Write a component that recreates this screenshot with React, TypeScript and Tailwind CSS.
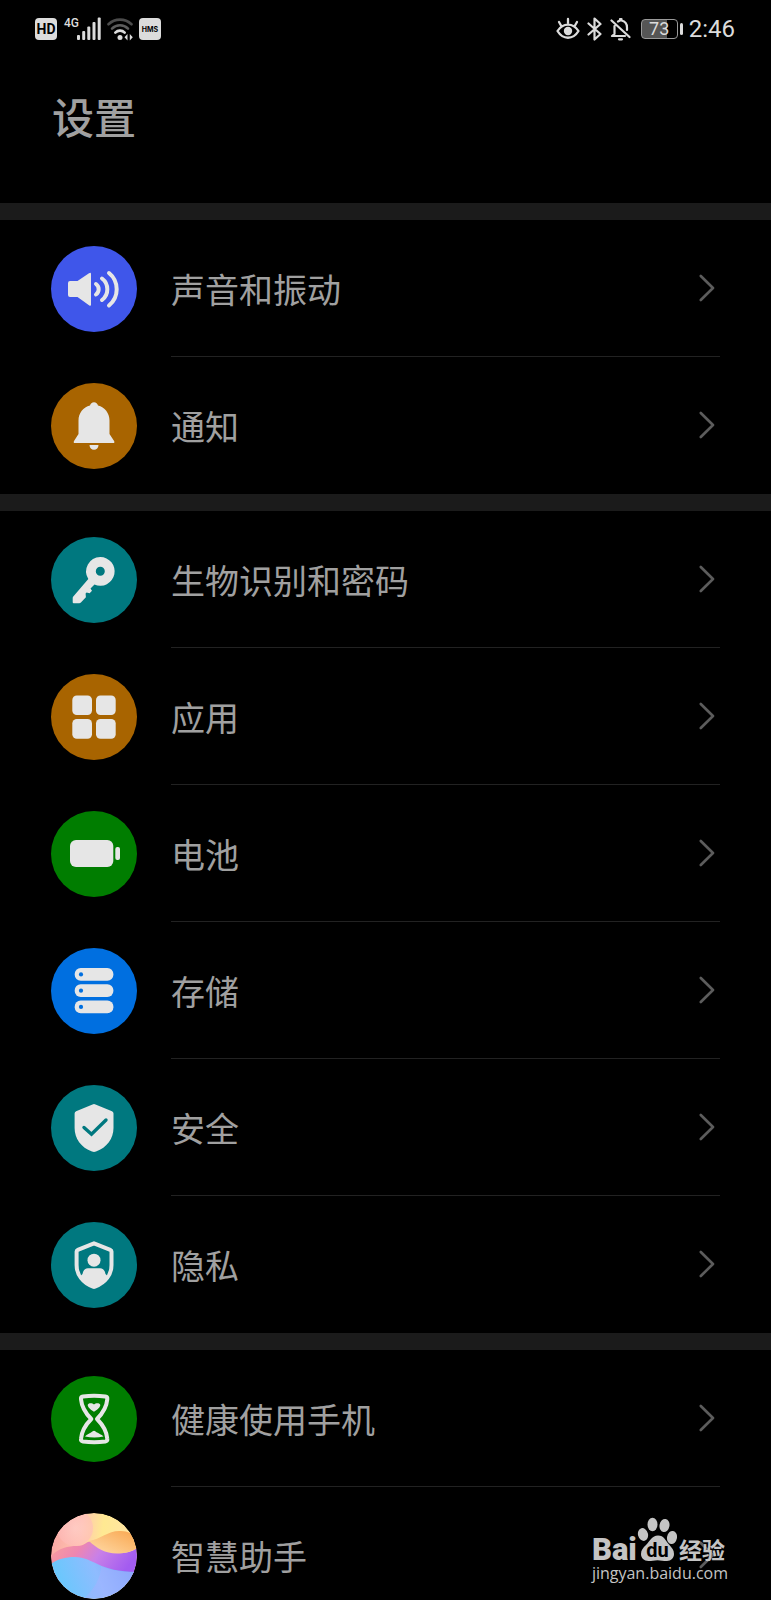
import type { ReactNode } from "react";

const FG = "#e6e6e6";

const SoundIcon = () => (
  <>
    <path d="M17 37q0-2 2-2h7.500L38 27.300q2-1.300 2 .7v30.500q0 2-2 .7L26.500 51H19q-2 0-2-2z" fill={FG} />
    <g fill="none" stroke={FG} strokeWidth="4" strokeLinecap="round">
      <path d="M45 38a6.500 6.500 0 0 1 0 10.500" />
      <path d="M51 32.500a13.500 13.500 0 0 1 0 21.500" />
      <path d="M58 27a21 21 0 0 1 0 32.500" />
    </g>
  </>
);

const BellIcon = () => (
  <path
    d="M43 19.300c2 0 3.600 1.300 4 3.200 6.700 1.800 11.500 7.500 11.500 15V51l4.600 7q1 2-1 2H24q-2 0-1-2l4.500-7V37.500c0-7.500 4.800-13.200 11.500-15 .4-1.900 2-3.200 4-3.200zM38.500 62h9c0 2.800-2 4.800-4.500 4.800s-4.500-2-4.500-4.800z"
    fill={FG}
  />
);

const KeyIcon = () => (
  <path
    fillRule="evenodd"
    d="M49.300 20a14.400 14.400 0 1 1-5.800 27.600L41 50l-1.500 1.500 1.500 2.300-2.400 2.400-3-.6-1 1 .3 3.600-5 5.300q-.7.700-1.700.700h-5.500q-1 0-1-1V61q0-1 .8-1.800L37.300 42A14.400 14.400 0 0 1 49.300 20zm0 9.800a4.500 4.500 0 1 0 0 9 4.500 4.500 0 0 0 0-9z"
    fill={FG}
  />
);

const AppsIcon = () => (
  <g fill={FG}>
    <rect x="21.300" y="21.500" width="19.700" height="19.500" rx="4.500" />
    <rect x="45" y="21.500" width="19.700" height="19.500" rx="4.500" />
    <rect x="21.300" y="45" width="19.700" height="19.700" rx="4.500" />
    <rect x="45" y="45" width="19.700" height="19.700" rx="4.500" />
  </g>
);

const BatteryIcon = () => (
  <g fill={FG}>
    <rect x="19" y="29" width="43.300" height="27" rx="6" />
    <rect x="64.300" y="36" width="4.700" height="13" rx="2" />
  </g>
);

const StorageIcon = () => (
  <>
    {[20, 36.3, 52.5].map((y) => (
      <g key={y}>
        <rect x="23.700" y={y} width="38.700" height="12.800" rx="6" fill={FG} />
        <circle cx="30" cy={y + 6.4} r="2.100" fill="#006fe0" />
      </g>
    ))}
  </>
);

const ShieldCheckIcon = () => (
  <>
    <path
      d="M41.500 19.500q1.500-.8 3 0L61 26.300q1.500.7 1.500 2.200V43c0 10.500-6.500 19.500-17.500 23.600q-2 .8-4 0C30 62.500 23.600 53.500 23.600 43V28.500q0-1.500 1.500-2.200z"
      fill={FG}
    />
    <path d="M33 42.500l7.500 6.700L55 35" fill="none" stroke="#00787f" strokeWidth="3.400" strokeLinecap="round" strokeLinejoin="miter" />
  </>
);

const PrivacyIcon = () => (
  <>
    <path
      d="M43 21.300l16.300 6.500q1.200.5 1.200 1.800V43c0 9.500-6 17.700-16.500 21.700q-1 .4-2 0C31.500 60.700 25.600 52.500 25.600 43V29.600q0-1.300 1.200-1.800z"
      fill="none"
      stroke={FG}
      strokeWidth="4"
      strokeLinejoin="round"
    />
    <circle cx="43" cy="38.200" r="6.500" fill={FG} />
    <path d="M29.500 54l2-2c.5-3.500 2.500-5.700 5.500-5.700h12c3 0 5 2.200 5.500 5.700l2 2c-3 6-8 9.500-13.500 11.500C37.500 63.500 32.500 60 29.500 54z" fill={FG} />
  </>
);

const HourglassIcon = () => (
  <>
    <path
      d="M32 20.500q11-1.500 22.300 0 2.300.4 2 2.700C55.600 31 52 37 46 43c6 6 9.600 12 10.300 19.800q.3 2.300-2 2.700-11 1.500-22.300 0-2.300-.4-2-2.700C30.700 55 34.300 49 40.300 43c-6-6-9.600-12-10.300-19.800q-.3-2.300 2-2.700z"
      fill="none"
      stroke={FG}
      strokeWidth="4"
      strokeLinejoin="round"
    />
    <path d="M43 28.500c1.800-1.800 6-1.800 6.300.6 0 2.300-3.300 4.900-6.300 6.700-3-1.800-6.300-4.400-6.300-6.700.3-2.400 4.500-2.400 6.300-.6zM34 60.500c1.500-2 6-3.500 7.700-5.200q1.300-1.200 2.600 0C46 57 51 58.500 52.500 60.500q-9 2.200-18.500 0z" fill={FG} />
  </>
);

const AssistantIcon = () => (
  <>
    <defs>
      <linearGradient id="orbTop" x1="0" y1="0.200" x2="1" y2="0.300">
        <stop offset="0" stopColor="#f9a6a4" />
        <stop offset="0.350" stopColor="#ffc8b0" />
        <stop offset="0.600" stopColor="#ffe992" />
        <stop offset="1" stopColor="#ffe3a8" />
      </linearGradient>
      <linearGradient id="orbOrange" x1="0" y1="1" x2="1" y2="0">
        <stop offset="0" stopColor="#ffdcaa" />
        <stop offset="1" stopColor="#f9a64e" />
      </linearGradient>
      <linearGradient id="orbPurple" x1="0" y1="0" x2="1" y2="0.300">
        <stop offset="0" stopColor="#f7a09c" />
        <stop offset="0.350" stopColor="#ee86b0" />
        <stop offset="0.600" stopColor="#c880e8" />
        <stop offset="1" stopColor="#a35cf0" />
      </linearGradient>
      <linearGradient id="orbBlue" x1="0" y1="0.600" x2="1" y2="0.400">
        <stop offset="0" stopColor="#62cafc" />
        <stop offset="0.550" stopColor="#8fbcff" />
        <stop offset="1" stopColor="#79a5fa" />
      </linearGradient>
      <radialGradient id="orbPink">
        <stop offset="0" stopColor="#ffd0d0" />
        <stop offset="1" stopColor="#ffbcba" />
      </radialGradient>
      <clipPath id="orbClip">
        <circle cx="43" cy="43" r="43" />
      </clipPath>
    </defs>
    <g clipPath="url(#orbClip)">
      <rect width="86" height="86" fill="url(#orbTop)" />
      <circle cx="24" cy="15" r="18" fill="url(#orbPink)" opacity="0.600" />
      <path d="M0 43c8-8 17-10 26-10 10 0 8-6 16-4 12 4 16 11 26 11 7 0 13-1 18-5v32H0z" fill="url(#orbPurple)" />
      <path d="M38 28c12-2 20-11 32-10 7 0 12 3 16 7v10c-6 4-13 5.500-20 5.500-12 0-20-5-28-12.500z" fill="url(#orbOrange)" />
      <path d="M0 51c7-5 14-7 24-7 18 0 24 15 62 15v27H0z" fill="url(#orbBlue)" />
      <path d="M50 53c0 12-7 24-18 33h54V59c-16 0-28-2-36-6z" fill="#b3adff" opacity="0.350" />
    </g>
  </>
);

type Item = { label: string; color: string; icon: ReactNode };

const groups: Item[][] = [
  [
    { label: "声音和振动", color: "bg-[#3f56ea]", icon: <SoundIcon /> },
    { label: "通知", color: "bg-[#a86400]", icon: <BellIcon /> },
  ],
  [
    { label: "生物识别和密码", color: "bg-[#00787f]", icon: <KeyIcon /> },
    { label: "应用", color: "bg-[#a86400]", icon: <AppsIcon /> },
    { label: "电池", color: "bg-[#007d00]", icon: <BatteryIcon /> },
    { label: "存储", color: "bg-[#006fe0]", icon: <StorageIcon /> },
    { label: "安全", color: "bg-[#00787f]", icon: <ShieldCheckIcon /> },
    { label: "隐私", color: "bg-[#00787f]", icon: <PrivacyIcon /> },
  ],
  [
    { label: "健康使用手机", color: "bg-[#007d00]", icon: <HourglassIcon /> },
    { label: "智慧助手", color: "bg-black", icon: <AssistantIcon /> },
  ],
];

function Row({ item, last }: { item: Item; last: boolean }) {
  return (
    <li>
      <a href="#" className="flex h-[137px] items-center gap-[34px] px-[51px]">
        <span className={`size-[86px] shrink-0 overflow-hidden rounded-full ${item.color}`}>
          <svg viewBox="0 0 86 86" className="size-full" aria-hidden="true">
            {item.icon}
          </svg>
        </span>
        <span className={`flex h-full grow items-center justify-between border-b pr-[5px] ${last ? "border-transparent" : "border-[#222222]"}`}>
          <span className="pt-px text-[34px] leading-10 text-[#a0a0a0]">{item.label}</span>
          <svg viewBox="0 0 16 28" className="h-7 w-4" fill="none" stroke="#5c5c5c" strokeWidth="2.600" strokeLinecap="round" strokeLinejoin="round" aria-hidden="true">
            <path d="M1.800 2l12.200 12L1.800 26" />
          </svg>
        </span>
      </a>
    </li>
  );
}

function StatusBar() {
  return (
    <div className="flex h-[58px] items-center justify-between pr-9 pl-[35px] font-[Roboto,sans-serif] text-[#dcdcdc]">
      <div className="flex items-center">
        <span className="flex size-[22px] items-center justify-center rounded bg-[#dcdcdc] text-[14px] leading-none font-bold text-black">HD</span>
        <span className="ml-[7px] -mt-3 text-[12px] leading-3 font-medium">4G</span>
        <svg viewBox="0 0 24 24" className="-ml-0.5 size-6" fill="currentColor" aria-hidden="true">
          <rect x="0" y="18" width="3" height="5" rx="1" />
          <rect x="5.200" y="14" width="3" height="9" rx="1" />
          <rect x="10.300" y="9.500" width="3" height="13.500" rx="1" />
          <rect x="15.500" y="5" width="3" height="18" rx="1" />
          <rect x="20.700" y="0.500" width="3" height="22.500" rx="1" />
        </svg>
        <svg viewBox="0 0 26 24" className="ml-1.5 h-6 w-[26px]" fill="none" strokeWidth="2.600" strokeLinecap="round" aria-hidden="true">
          <path d="M1.500 7.300a16.500 16.500 0 0 1 23 0" stroke="#4c4c4c" />
          <path d="M5 11.600a11.200 11.200 0 0 1 16 0" stroke="#5c5c5c" />
          <path d="M8.300 15.600a6.600 6.600 0 0 1 9.400 0" stroke="currentColor" />
          <circle cx="13" cy="20.500" r="2.500" fill="currentColor" />
          <path d="M20.500 17v6.500l-3-3.200zM22.800 17v6.500l3-3.200z" fill="currentColor" />
        </svg>
        <span className="ml-1.5 flex size-[22px] items-center justify-center rounded bg-[#dcdcdc] font-[Inter,sans-serif] text-[7px] leading-none font-bold text-black">HMS</span>
      </div>
      <div className="flex items-center">
        <svg viewBox="0 0 24 24" className="size-6" fill="none" stroke="currentColor" strokeWidth="2.300" strokeLinecap="round" aria-hidden="true">
          <path d="M1.500 14C7 5.500 17 5.500 22.500 14 17 23 7 23 1.500 14z" strokeLinejoin="round" />
          <circle cx="12" cy="14" r="4.200" fill="currentColor" stroke="none" />
          <path d="M12 2v4M3 5l2 3.500M21 5l-2 3.500" />
        </svg>
        <svg viewBox="0 0 16 24" className="ml-[7px] h-6 w-4" fill="none" stroke="currentColor" strokeWidth="2.200" strokeLinejoin="round" strokeLinecap="round" aria-hidden="true">
          <path d="M1.500 6.500l12 10.500-6 5.500v-21l6 5.500-12 10.500" />
        </svg>
        <svg viewBox="0 0 22 24" className="ml-[7px] h-6 w-[22px]" fill="none" stroke="currentColor" strokeWidth="2.200" strokeLinecap="round" strokeLinejoin="round" aria-hidden="true">
          <path d="M1.500 3.500l18 16.500M4.500 9v8L2 19h13M8 4.500l2-1V2h1.500v1.500c4 .8 5.500 3.500 5.500 7v2.500" />
          <path d="M9 22.300h3" />
        </svg>
        <span className="ml-[9px] flex h-5 w-[37px] items-center justify-center rounded border border-[#9a9a9a] bg-linear-to-r from-[#555555] from-70% to-black to-70% text-[18px] leading-none">73</span>
        <span className="ml-0.5 h-3 w-[3px] rounded-sm bg-[#dcdcdc]" />
        <span className="ml-1.5 text-[24px] leading-7">2:46</span>
      </div>
    </div>
  );
}

function Watermark() {
  return (
    <div className="absolute right-[43px] bottom-[15px] flex flex-col text-[#c4c4c4]">
      <div className="flex h-11 items-end">
        <span className="font-[Roboto,sans-serif] text-[31px] leading-[22px] font-black">Bai</span>
        <svg viewBox="0 0 40 44" className="h-11 w-10" aria-hidden="true">
          <g fill="#c4c4c4">
            <ellipse cx="6" cy="17.500" rx="5" ry="6.500" transform="rotate(-15 6 17.500)" />
            <ellipse cx="15.500" cy="7.500" rx="5" ry="6.800" />
            <ellipse cx="27.500" cy="8.500" rx="5" ry="6.500" transform="rotate(10 27.500 8.500)" />
            <ellipse cx="35" cy="20.500" rx="5" ry="6.500" transform="rotate(10 35 20.500)" />
            <path d="M21 18.500c6 0 7.500 5 11 9 3 3.500 5 5.500 5 9.500 0 4-3 7-7 7-4 0-6-.8-9.500-.8S15 44 11.500 44C7 44 4 41 4 37c0-4 2-6 5-9 4-4 6-9.500 12-9.500z" />
          </g>
          <text x="20.500" y="40" textAnchor="middle" fill="#000000" fontFamily="Roboto, sans-serif" fontWeight="700" fontSize="20">du</text>
        </svg>
        <span className="ml-0.5 text-[23px] leading-6 font-bold">经验</span>
      </div>
      <span className="font-['Open_Sans',sans-serif] text-[16px] leading-6">jingyan.baidu.com</span>
    </div>
  );
}

export default function App() {
  return (
    <div className="relative h-screen overflow-hidden bg-black font-['Noto_Sans_CJK_SC',sans-serif]">
      <StatusBar />
      <header className="h-[145px] px-[52px] pt-[30px]">
        <h1 className="text-[42px] leading-[56px] font-medium text-[#a0a0a0]">设置</h1>
      </header>
      <main>
        {groups.map((items) => (
          <ul key={items[0].label} className="border-t-[17px] border-[#1b1b1b]">
            {items.map((item, i) => (
              <Row key={item.label} item={item} last={i === items.length - 1} />
            ))}
          </ul>
        ))}
      </main>
      <Watermark />
    </div>
  );
}
